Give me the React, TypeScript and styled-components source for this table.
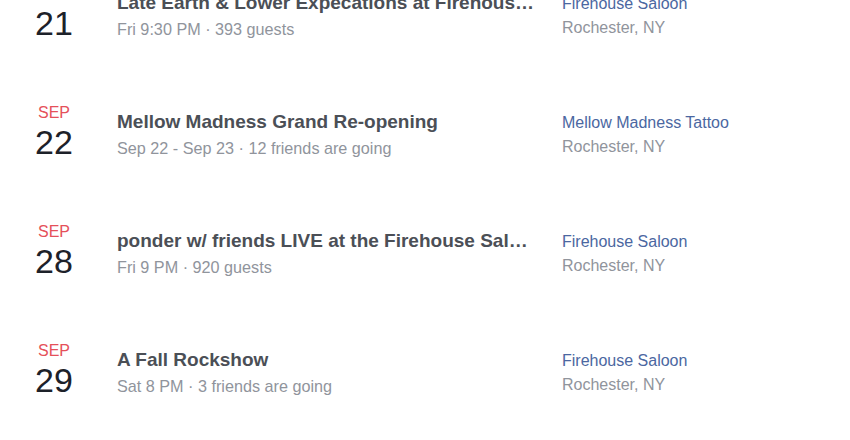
import React from "react";
import styled, { createGlobalStyle } from "styled-components";

const Global = createGlobalStyle`
  html, body { margin: 0; padding: 0; background: #ffffff; }
  body { font-family: "Liberation Sans", Arial, Helvetica, sans-serif; overflow: hidden; }
`;

const Viewport = styled.div`
  width: 850px;
  height: 440px;
  overflow: hidden;
  background: #ffffff;
`;

const List = styled.ul`
  list-style: none;
  margin: -23px 0 0 0;
  padding: 0;
`;

const Row = styled.li`
  display: flex;
  align-items: flex-start;
  height: 119px;
  box-sizing: border-box;
  padding: 8px 0 0 24px;
`;

const DateBlock = styled.div`
  width: 60px;
  flex: none;
  display: flex;
  flex-direction: column;
  align-items: center;
`;

const Month = styled.span`
  font-size: 16px;
  line-height: 18px;
  color: #e5505a;
  text-transform: uppercase;
`;

const Day = styled.span`
  margin-top: 2px;
  font-size: 34px;
  line-height: 36px;
  color: #1d2129;
`;

const Info = styled.div`
  margin: 7px 0 0 33px;
  width: 420px;
  flex: none;
  display: flex;
  flex-direction: column;
`;

const Title = styled.span`
  font-size: 19px;
  line-height: 22px;
  font-weight: 700;
  color: #4b4f56;
  white-space: nowrap;
  overflow: hidden;
  text-overflow: ellipsis;
`;

const Meta = styled.span`
  margin-top: 5px;
  font-size: 16.2px;
  line-height: 20px;
  color: #90949c;
  white-space: nowrap;
`;

const Place = styled.div`
  margin: 9px 0 0 25px;
  display: flex;
  flex-direction: column;
`;

const PlaceName = styled.a`
  font-size: 16px;
  line-height: 20px;
  color: #4b67a1;
  text-decoration: none;
`;

const City = styled.span`
  margin-top: 4px;
  font-size: 16px;
  line-height: 20px;
  color: #90949c;
`;

type EventItem = {
  month: string;
  day: string;
  title: string;
  meta: string;
  place: string;
  city: string;
};

const events: EventItem[] = [
  {
    month: "Sep",
    day: "21",
    title: "Late Earth & Lower Expecations at Firehouse Saloon",
    meta: "Fri 9:30 PM · 393 guests",
    place: "Firehouse Saloon",
    city: "Rochester, NY",
  },
  {
    month: "Sep",
    day: "22",
    title: "Mellow Madness Grand Re-opening",
    meta: "Sep 22 - Sep 23 · 12 friends are going",
    place: "Mellow Madness Tattoo",
    city: "Rochester, NY",
  },
  {
    month: "Sep",
    day: "28",
    title: "ponder w/ friends LIVE at the Firehouse Saloon",
    meta: "Fri 9 PM · 920 guests",
    place: "Firehouse Saloon",
    city: "Rochester, NY",
  },
  {
    month: "Sep",
    day: "29",
    title: "A Fall Rockshow",
    meta: "Sat 8 PM · 3 friends are going",
    place: "Firehouse Saloon",
    city: "Rochester, NY",
  },
];

export default function App() {
  return (
    <Viewport>
      <Global />
      <List>
        {events.map((e) => (
          <Row key={e.day}>
            <DateBlock>
              <Month>{e.month}</Month>
              <Day>{e.day}</Day>
            </DateBlock>
            <Info>
              <Title>{e.title}</Title>
              <Meta>{e.meta}</Meta>
            </Info>
            <Place>
              <PlaceName href="#">{e.place}</PlaceName>
              <City>{e.city}</City>
            </Place>
          </Row>
        ))}
      </List>
    </Viewport>
  );
}
